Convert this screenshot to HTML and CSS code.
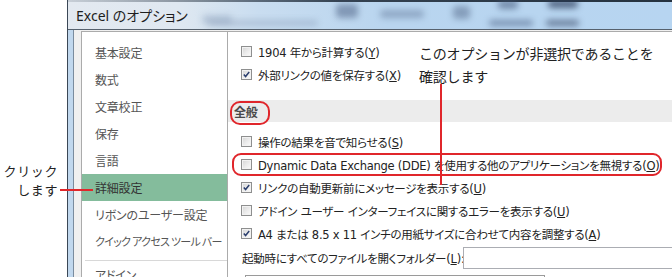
FILE: index.html
```html
<!DOCTYPE html>
<html lang="ja">
<head>
<meta charset="utf-8">
<title>Excel のオプション</title>
<link rel="stylesheet" href="styles.css">
</head>
<body>
<div class="page">
  <div class="callout-left">
    <div class="callout-text">クリック<br>します</div>
  </div>
  <div class="dialog">
    <div class="titlebar">
      <span class="title">Excel のオプション</span>
      <div class="blur b1"></div>
      <div class="blur b2"></div>
      <div class="blur b3"></div>
      <div class="blur b4"></div>
      <div class="blur b5"></div>
      <div class="blur b6"></div>
      <div class="blur b7"></div>
      <div class="blur b8"></div>
      <div class="blur b9"></div>
    </div>
    <div class="frame">
      <div class="client">
        <nav class="nav">
          <div class="nav-item">基本設定</div>
          <div class="nav-item">数式</div>
          <div class="nav-item">文章校正</div>
          <div class="nav-item">保存</div>
          <div class="nav-item">言語</div>
          <div class="nav-item active">詳細設定</div>
          <div class="nav-item">リボンのユーザー設定</div>
          <div class="nav-item nav-item-long">クイック アクセス ツール バー</div>
          <div class="nav-sep"></div>
          <div class="nav-item">アドイン</div>
        </nav>
        <main class="content">
          <div class="row"><span class="cb"></span><span>1904 年から計算する(<u>Y</u>)</span></div>
          <div class="row"><span class="cb checked"><svg viewBox="0 0 11 11"><path d="M2.2 5.4 L4.4 8 L8.8 2.4"/></svg></span><span>外部リンクの値を保存する(<u>X</u>)</span></div>
          <div class="section"><span class="section-title">全般</span></div>
          <div class="row"><span class="cb"></span><span>操作の結果を音で知らせる(<u>S</u>)</span></div>
          <div class="row row-marked"><span class="cb"></span><span>Dynamic Data Exchange (DDE) を使用する他のアプリケーションを無視する(<u>O</u>)</span></div>
          <div class="row"><span class="cb checked"><svg viewBox="0 0 11 11"><path d="M2.2 5.4 L4.4 8 L8.8 2.4"/></svg></span><span>リンクの自動更新前にメッセージを表示する(<u>U</u>)</span></div>
          <div class="row"><span class="cb"></span><span>アドイン ユーザー インターフェイスに関するエラーを表示する(<u>U</u>)</span></div>
          <div class="row"><span class="cb checked"><svg viewBox="0 0 11 11"><path d="M2.2 5.4 L4.4 8 L8.8 2.4"/></svg></span><span>A4 または 8.5 x 11 インチの用紙サイズに合わせて内容を調整する(<u>A</u>)</span></div>
          <div class="row folder"><span class="folder-label">起動時にすべてのファイルを開くフォルダー(<u>L</u>):</span><span class="input"></span></div>
          <div class="next"></div>
          <div class="note">このオプションが非選択であることを<br>確認します</div>
          <div class="note-line"></div>
        </main>
      </div>
    </div>
  </div>
  <div class="click-line"></div>
</div>
</body>
</html>
```

FILE: styles.css
```css
* { box-sizing: border-box; }
html, body { margin: 0; padding: 0; background: #fff; }
body {
  width: 672px;
  height: 277px;
  overflow: hidden;
  font-family: "Noto Sans CJK JP", sans-serif;
  color: #222;
}
.page {
  display: flex;
  width: 672px;
  height: 277px;
  position: relative;
  overflow: hidden;
}
.callout-left {
  width: 67px;
  flex: none;
  padding-top: 161px;
}
.callout-text {
  font-size: 13px;
  line-height: 19px;
  text-align: right;
  padding-right: 9px;
  letter-spacing: 0.6px;
  color: #222;
}
.click-line {
  position: absolute;
  left: 60px;
  top: 189px;
  width: 33px;
  height: 2px;
  background: #e0262b;
  z-index: 5;
}
.dialog {
  flex: 1;
  min-width: 0;
  display: flex;
  flex-direction: column;
  border-left: 1px solid #3b4756;
}
.titlebar {
  height: 30px;
  flex: none;
  position: relative;
  overflow: hidden;
  display: flex;
  align-items: center;
  padding-left: 8px;
  border-bottom: 1px solid #56616d;
  background:
    linear-gradient(90deg, rgba(40,55,70,0.15) 0, rgba(38,50,64,0.9) 45%, #25323f 100%) top / 100% 2px no-repeat,
    linear-gradient(90deg, #e3e9f0 0, #dfe8f1 110px, #c9ddf0 190px, #b9d5ef 320px, #b7d5f1 100%);
}
.title {
  font-family: "Noto Sans", "Noto Sans CJK JP", sans-serif;
  font-feature-settings: "palt";
  font-size: 14px;
  color: #1e1e1e;
  position: relative;
  z-index: 2;
}
.blur {
  position: absolute;
  border-radius: 4px;
  filter: blur(3px);
  background: rgba(70, 90, 120, 0.45);
}
.b1 { left: 134px; top: 15px; width: 30px; height: 9px; background: rgba(150,170,195,0.5); }
.b2 { left: 140px; top: 20px; width: 110px; height: 6px; background: rgba(120,140,170,0.35); }
.b3 { left: 268px; top: 4px; width: 22px; height: 14px; background: rgba(70,90,125,0.5); }
.b4 { left: 312px; top: 10px; width: 44px; height: 8px; background: rgba(80,100,135,0.4); }
.b5 { left: 385px; top: 6px; width: 17px; height: 13px; background: rgba(70,90,125,0.45); }
.b6 { left: 430px; top: 0px; width: 20px; height: 9px; background: rgba(60,80,115,0.55); }
.b7 { left: 421px; top: 20px; width: 44px; height: 6px; background: rgba(60,80,115,0.5); }
.b8 { left: 480px; top: 0px; width: 30px; height: 8px; background: rgba(40,55,85,0.7); }
.b9 { left: 478px; top: 20px; width: 33px; height: 6px; background: rgba(50,65,95,0.6); }
.frame {
  flex: 1;
  display: flex;
  min-height: 0;
  border-left: 5px solid #c1d8ee;
}
.client {
  flex: 1;
  display: flex;
  min-width: 0;
  border-left: 1px solid #7a8c9e;
  background: #f0f0f0;
  padding: 1px 0 0 7px;
}
.nav {
  width: 147px;
  flex: none;
  background: #fff;
  border: 1px solid #ababab;
  border-bottom: none;
  padding-top: 7px;
  font-family: "Noto Sans CJK JP", sans-serif;
  font-feature-settings: "palt";
  font-size: 12px;
  letter-spacing: -0.2px;
  color: #555;
}
.nav-item {
  height: 27px;
  line-height: 27px;
  padding-left: 13px;
  white-space: nowrap;
  overflow: hidden;
}
.nav-item-long {
  font-size: 11px;
  letter-spacing: -0.7px;
}
.nav-item.active {
  background: #84bc9c;
  color: #333;
}
.nav-sep {
  height: 1px;
  background: #d8d8d8;
  margin: 5px 0 0 3px;
}
.content {
  flex: 1;
  min-width: 0;
  position: relative;
  background: #fff;
  border-top: 1px solid #ababab;
  padding-top: 8px;
  font-family: "DejaVu Sans", "Noto Sans CJK JP", sans-serif;
  font-feature-settings: "palt";
  font-size: 11.5px;
  letter-spacing: -0.25px;
  color: #222;
}
.row {
  height: 23px;
  display: flex;
  align-items: center;
  padding-left: 13px;
  white-space: nowrap;
}
.row-marked { position: relative; }
.row-marked::after {
  content: "";
  position: absolute;
  left: 4px;
  right: 10px;
  top: 0;
  bottom: 0;
  border: 2px solid #e0262b;
  border-radius: 9px;
}
.cb {
  width: 11px;
  height: 11px;
  flex: none;
  margin-right: 6px;
  border: 1px solid #8e8f8f;
  background: linear-gradient(135deg, #d4d4d4 0%, #ececec 55%, #fbfbfb 100%);
  box-shadow: inset 0 0 0 1px #f2f2f2;
  display: flex;
}
.cb svg {
  width: 9px;
  height: 9px;
}
.cb svg path {
  fill: none;
  stroke: #2b3f6e;
  stroke-width: 1.8;
}
u { text-decoration: underline; text-underline-offset: 1px; }
.section {
  position: relative;
  height: 22px;
  margin: 14px 0 8px;
  background: #ececec;
  padding-left: 6px;
  display: flex;
  align-items: center;
}
.section::after {
  content: "";
  position: absolute;
  left: 2px;
  top: 1px;
  width: 36px;
  height: 20px;
  border: 2px solid #e0262b;
  border-radius: 10px;
}
.section-title {
  font-family: "Noto Sans CJK JP", sans-serif;
  font-size: 12px;
  font-weight: bold;
  color: #4a4a4a;
}
.row.folder {
  height: 24px;
  margin-top: 1px;
  padding-left: 14px;
}
.folder-label {
  width: 221px;
  flex: none;
}
.input {
  width: 260px;
  height: 22px;
  flex: none;
  border: 1px solid #abadb3;
  background: #fff;
}
.next {
  margin: 5px 0 0 17px;
  width: 300px;
  height: 20px;
  border: 1px solid #9a9a9a;
}
.note {
  position: absolute;
  left: 191px;
  top: 10px;
  font-family: "Noto Sans CJK JP", sans-serif;
  font-feature-settings: normal;
  font-size: 14px;
  letter-spacing: -0.2px;
  line-height: 23px;
  color: #222;
  white-space: nowrap;
}
.note-line {
  position: absolute;
  left: 212px;
  top: 52px;
  width: 2px;
  height: 101px;
  background: #e0262b;
}
```
